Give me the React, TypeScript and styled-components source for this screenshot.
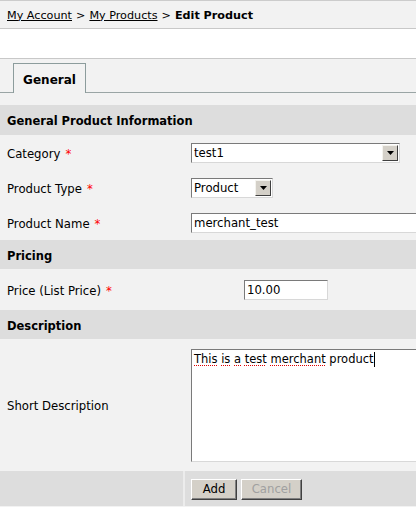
import React from 'react';
import styled, { createGlobalStyle } from 'styled-components';

const GlobalStyle = createGlobalStyle`
  html, body {
    margin: 0;
    padding: 0;
    background: #f2f2f2;
    overflow: hidden;
  }
  body {
    font-family: "DejaVu Sans", Verdana, sans-serif;
    font-size: 11.7px;
    color: #000;
  }
`;

const Page = styled.div`
  width: 416px;
  min-height: 507px;
  background: #f2f2f2;
`;

const Breadcrumb = styled.div`
  height: 29px;
  border-top: 1px solid #cccccc;
  border-bottom: 1px solid #c8c8c8;
  display: flex;
  align-items: center;
  padding: 1px 7px 0;
  box-sizing: border-box;
  gap: 4px;
  white-space: nowrap;
  font-size: 11.2px;
`;

const Crumb = styled.a`
  color: #000;
  text-decoration: underline;
`;

const Current = styled.b`
  font-weight: bold;
`;

const Spacer = styled.div`
  height: 29px;
  background: #fff;
  border-bottom: 1px solid #c8c8c8;
`;

const TabStrip = styled.div`
  height: 33px;
  border-bottom: 1px solid #9aa5a5;
  display: flex;
  align-items: flex-end;
  padding-left: 13px;
`;

const Tab = styled.div`
  width: 73px;
  height: 30px;
  border: 1px solid #8c9c9c;
  border-bottom: none;
  background: #f2f2f2;
  margin-bottom: -1px;
  display: flex;
  align-items: center;
  justify-content: center;
  font-weight: bold;
  font-size: 12px;
  padding-top: 2px;
  box-sizing: border-box;
`;

const Form = styled.div`
  margin-top: 12px;
`;

const SectionHeader = styled.div<{ $height?: number }>`
  height: ${({ $height }) => $height ?? 29}px;
  background: #dddddd;
  display: flex;
  align-items: center;
  padding: 2px 7px 0;
  box-sizing: border-box;
  font-weight: bold;
  font-size: 11.5px;
`;

const Row = styled.div<{ $height: number }>`
  height: ${({ $height }) => $height}px;
  display: grid;
  grid-template-columns: 191px 1fr;
  align-items: center;
`;

const Label = styled.div`
  padding: 2px 0 0 7px;
  white-space: nowrap;
`;

const Required = styled.span`
  color: #ff0000;
  margin-left: 5px;
`;

const Field = styled.div<{ $indent?: number }>`
  padding-left: ${({ $indent }) => $indent ?? 0}px;
  display: flex;
  overflow: hidden;
`;

const inset = `
  border-top: 1px solid #7a7a7a;
  border-left: 1px solid #7a7a7a;
  border-bottom: 1px solid #d8d8d8;
  border-right: 1px solid #d8d8d8;
  background: #fff;
  box-sizing: border-box;
`;

const SelectBox = styled.div<{ $width: number }>`
  ${inset}
  width: ${({ $width }) => $width}px;
  height: 20px;
  display: flex;
  align-items: center;
  padding-left: 2px;
  font-size: 11.7px;
`;

const SelectText = styled.span`
  flex: 1;
`;

const DropButton = styled.span`
  width: 16px;
  height: 16px;
  margin-right: 1px;
  box-sizing: border-box;
  background: #d4d0c8;
  border-top: 1px solid #f4f3ee;
  border-left: 1px solid #f4f3ee;
  border-right: 1px solid #404040;
  border-bottom: 1px solid #404040;
  display: flex;
  align-items: center;
  justify-content: center;
`;

const TextBox = styled.div<{ $width: number }>`
  ${inset}
  width: ${({ $width }) => $width}px;
  flex-shrink: 0;
  height: 20px;
  display: flex;
  align-items: center;
  padding-left: 2px;
  font-size: 11.7px;
`;

const TextArea = styled.div`
  ${inset}
  width: 260px;
  flex-shrink: 0;
  height: 113px;
  padding: 2px 2px;
  font-size: 11.5px;
  line-height: 14px;
`;

const Misspelt = styled.span`
  text-decoration: underline dotted #e00000;
  text-decoration-thickness: 1px;
  text-underline-offset: 2px;
`;

const Caret = styled.span`
  display: inline-block;
  width: 1px;
  height: 15px;
  background: #000;
  vertical-align: top;
`;

const ButtonBar = styled.div`
  height: 35px;
  background: #dddddd;
  display: grid;
  grid-template-columns: 183px 2px 1fr;
`;

const Divider = styled.div`
  background: #ececec;
`;

const Buttons = styled.div`
  display: flex;
  align-items: center;
  gap: 4px;
  padding: 1px 0 0 6px;
`;

const Button = styled.button<{ $width: number; disabled?: boolean }>`
  width: ${({ $width }) => $width}px;
  height: 21px;
  padding: 0;
  font-family: inherit;
  font-size: 11.7px;
  background: #d4d0c8;
  color: ${({ disabled }) => (disabled ? '#a0a0a0' : '#000')};
  border-top: 1px solid #ffffff;
  border-left: 1px solid #ffffff;
  border-right: 1px solid #404040;
  border-bottom: 1px solid #404040;
  box-shadow: inset -1px -1px 0 #808080;
`;

const Arrow = () => (
  <svg width="7" height="4" viewBox="0 0 7 4">
    <path d="M0 0h7L3.5 4z" fill="#000" />
  </svg>
);

const App: React.FC = () => (
  <Page>
    <GlobalStyle />
    <Breadcrumb>
      <Crumb>My Account</Crumb>&gt;<Crumb>My Products</Crumb>&gt;<Current>Edit Product</Current>
    </Breadcrumb>
    <Spacer />
    <TabStrip>
      <Tab>General</Tab>
    </TabStrip>

    <Form>
      <SectionHeader $height={30}>General Product Information</SectionHeader>
      <Row $height={35}>
        <Label>Category<Required>*</Required></Label>
        <Field>
          <SelectBox $width={209}>
            <SelectText>test1</SelectText>
            <DropButton><Arrow /></DropButton>
          </SelectBox>
        </Field>
      </Row>
      <Row $height={35}>
        <Label>Product Type<Required>*</Required></Label>
        <Field>
          <SelectBox $width={82}>
            <SelectText>Product</SelectText>
            <DropButton><Arrow /></DropButton>
          </SelectBox>
        </Field>
      </Row>
      <Row $height={35}>
        <Label>Product Name<Required>*</Required></Label>
        <Field>
          <TextBox $width={240}>merchant_test</TextBox>
        </Field>
      </Row>

      <SectionHeader>Pricing</SectionHeader>
      <Row $height={41}>
        <Label>Price (List Price)<Required>*</Required></Label>
        <Field $indent={53}>
          <TextBox $width={84}>10.00</TextBox>
        </Field>
      </Row>

      <SectionHeader>Description</SectionHeader>
      <Row $height={132}>
        <Label>Short Description</Label>
        <Field>
          <TextArea>
            <Misspelt>This</Misspelt> <Misspelt>is</Misspelt> <Misspelt>a</Misspelt>{' '}
            <Misspelt>test</Misspelt> <Misspelt>merchant</Misspelt> product<Caret />
          </TextArea>
        </Field>
      </Row>

      <ButtonBar>
        <div />
        <Divider />
        <Buttons>
          <Button $width={46}>Add</Button>
          <Button $width={61} disabled>Cancel</Button>
        </Buttons>
      </ButtonBar>
    </Form>
  </Page>
);

export default App;
